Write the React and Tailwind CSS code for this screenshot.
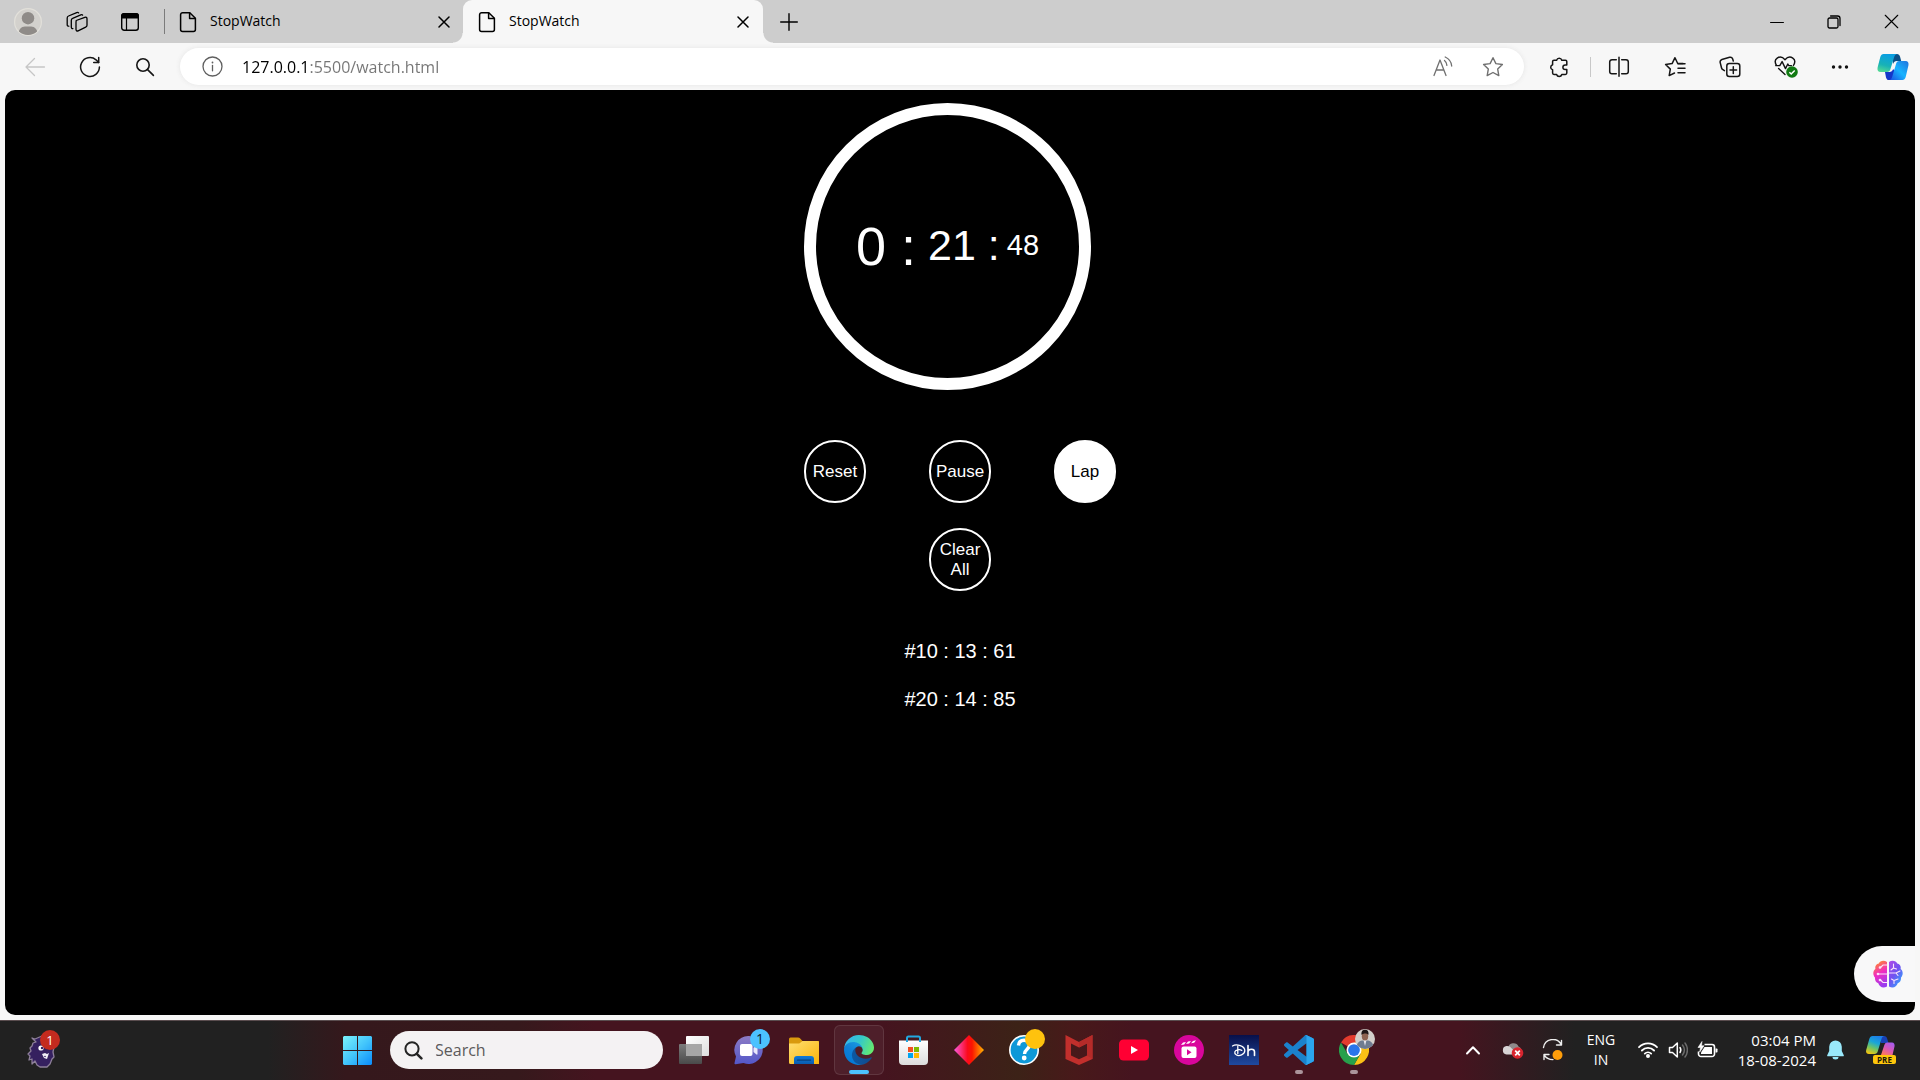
import React from "react";

const UI = "font-['Open_Sans','Noto_Sans',sans-serif]";

/* ---------- browser chrome icons ---------- */

function Line({ size = 20, box = 20, sw = 1.2, className = "", children }) {
  return (
    <svg
      width={size}
      height={size}
      viewBox={`0 0 ${box} ${box}`}
      fill="none"
      stroke="currentColor"
      strokeWidth={sw}
      strokeLinecap="round"
      strokeLinejoin="round"
      className={`shrink-0 ${className}`}
      aria-hidden="true"
    >
      {children}
    </svg>
  );
}

const AvatarIcon = () => (
  <svg width="28" height="28" viewBox="0 0 28 28" aria-hidden="true">
    <clipPath id="av">
      <circle cx="14" cy="14" r="13" />
    </clipPath>
    <circle cx="14" cy="14" r="13.4" fill="#d3d1cd" stroke="#e2e0da" strokeWidth="1.2" />
    <g clipPath="url(#av)" fill="#8f8b88">
      <circle cx="14" cy="10.2" r="6.2" />
      <path d="M4 28c0-6 3-9.6 7-9.6h6c4 0 7 3.600 7 9.600z" />
    </g>
  </svg>
);

const WorkspacesIcon = () => (
  <Line size={22} box={22} sw={1.3}>
    <path d="M10.200 9.500l8.600-3.200c1.200-.4 2.200.2 2.200 1.500v6.400c0 .9-.5 1.600-1.300 1.900l-7.600 3.700c-1.100.5-2.100 0-2.100-1.200v-7.300c0-.9.300-1.500.200-1.800z" />
    <path d="M6.900 17.600c-1 .1-1.600-.5-1.600-1.500V9.300c0-1 .4-1.700 1.300-2l8.200-3.500c.8-.3 1.500-.2 1.800.3" />
    <path d="M2.800 15.200c-1 .1-1.600-.5-1.600-1.500V7c0-1 .4-1.700 1.300-2l8.200-3.400c.8-.3 1.500-.2 1.900.3" />
  </Line>
);

const TabActionsIcon = () => (
  <svg width="20" height="20" viewBox="0 0 20 20" fill="none" aria-hidden="true">
    <rect x="1.700" y="1.700" width="16.600" height="16.600" rx="2.500" stroke="#000" strokeWidth="1.400" />
    <path d="M1 6.600V4a3 3 0 0 1 3-3h12a3 3 0 0 1 3 3v2.600z" fill="#000" />
    <path d="M6.500 6v12" stroke="#000" strokeWidth="1.200" />
  </svg>
);

const PageIcon = () => (
  <Line size={22} box={22} sw={1.500}>
    <path d="M5.600 1.700h7.200l5.600 5.500v11.200a2 2 0 0 1-2 2H5.600a2 2 0 0 1-2-2V3.700a2 2 0 0 1 2-2z" />
    <path d="M12.600 2v5.400h5.600" />
  </Line>
);

const CrossIcon = ({ size = 12, sw = 1.500 }) => (
  <Line size={size} box={12} sw={sw}>
    <path d="M1 1l10 10M11 1L1 11" />
  </Line>
);

const CopilotIcon = () => (
  <svg width="32" height="28" viewBox="0 0 32 28" aria-hidden="true">
    <defs>
      <linearGradient id="cp1" x1="0" y1="1" x2="0.300" y2="0">
        <stop offset="0" stopColor="#5de08f" />
        <stop offset=".45" stopColor="#18b2b6" />
        <stop offset="1" stopColor="#0a9fe0" />
      </linearGradient>
      <linearGradient id="cp2" x1="0" y1="1" x2="1" y2="0">
        <stop offset="0" stopColor="#1b4fe0" />
        <stop offset=".5" stopColor="#18b4ff" />
        <stop offset="1" stopColor="#2272dc" />
      </linearGradient>
    </defs>
    <path d="M15 1h5c1.600 0 2.500 1 3 2.600L24.200 8h-4.400c-2 0-3 1-3.800 3z" fill="#0b4f86" />
    <path d="M17 27h-5c-1.600 0-2.500-1-3-2.600L8 19h4.400c2 0 3-1 3.800-3l2.800 4z" fill="#1437c9" />
    <path d="M6.500 1H20c-1.500.3-2.300 1.500-2.900 3.300l-3.700 12C12.800 18.300 11.800 19 10 19H3.600C1 19 0 17 .6 14.500L3.300 4C3.900 2 5 1 6.500 1z" fill="url(#cp1)" />
    <path d="M25.500 27H12.300c1.500-.3 2.300-1.500 2.900-3.300l3.600-12C19.400 9 20.500 8 22.200 8h6.200c2.600 0 3.600 2 3 4.500L28.700 24c-.6 2-1.700 3-3.200 3z" fill="url(#cp2)" />
  </svg>
);

const HealthIcon = () => (
  <svg width="24" height="24" viewBox="0 0 24 24" fill="none" aria-hidden="true">
    <path
      d="M2.600 10.500C.7 7.500 1 4.600 3.200 3.100 5.800 1.400 8.800 2.200 11 4.700c2.200-2.500 5.200-3.300 7.800-1.600 2.200 1.500 2.500 4.400.6 7.400M1.600 10.600h4.200l2.300-4 3.400 7 2.300-4.600 1 1.600h2.600M4.600 13.400l6.400 6"
      stroke="#111"
      strokeWidth="1.400"
      strokeLinecap="round"
      strokeLinejoin="round"
    />
    <circle cx="18" cy="17" r="5.800" fill="#117a12" />
    <path d="M15.400 17.200l1.800 1.800 3.500-3.600" stroke="#fff" strokeWidth="1.500" />
  </svg>
);

function BrowserTab({ active }) {
  return (
    <div
      className={
        active
          ? "relative flex h-full w-[300px] items-center rounded-t-[9px] bg-[#f7f7f7] pl-[13px] pr-3"
          : "flex h-full w-[298px] items-center pl-[12px] pr-[11px]"
      }
    >
      {active && (
        <>
          <span className="absolute bottom-0 right-full h-2.5 w-2.5 bg-[radial-gradient(circle_at_0_0,#cdcdcd_9px,#f7f7f7_10px)]" />
          <span className="absolute bottom-0 left-full h-2.5 w-2.5 bg-[radial-gradient(circle_at_100%_0,#cdcdcd_9px,#f7f7f7_10px)]" />
        </>
      )}
      <PageIcon />
      <span className="ml-[11px] flex-1 pb-0.5 text-[14px] leading-5">StopWatch</span>
      <button aria-label="Close tab" className="flex h-4 w-4 items-center justify-center">
        <CrossIcon />
      </button>
    </div>
  );
}

function TabStrip() {
  return (
    <header className="flex h-[43px] items-center bg-[#cdcdcd]">
      <button aria-label="Profile" className="ml-3.5"><AvatarIcon /></button>
      <button aria-label="Workspaces" className="ml-[24px]"><WorkspacesIcon /></button>
      <button aria-label="Tab actions" className="ml-[32px]"><TabActionsIcon /></button>
      <span className="ml-6 h-[25px] w-px bg-[#7b7b7b]" />
      <nav className="flex h-full">
        <BrowserTab />
        <BrowserTab active />
      </nav>
      <button aria-label="New tab" className="ml-[17px]">
        <Line size={18} box={18} sw={1.400}><path d="M9 .7v16.600M.7 9h16.600" /></Line>
      </button>
      <div className="ml-auto mr-[21px] flex items-center gap-[43px]">
        <button aria-label="Minimize"><Line size={14} box={14} sw={1.200}><path d="M.6 7.500h12.800" /></Line></button>
        <button aria-label="Restore">
          <Line size={14} box={14} sw={1.300}>
            <rect x="1" y="3" width="10" height="10" rx="1.500" />
            <path d="M3.600 1h7A2.500 2.500 0 0 1 13 3.500v7" />
          </Line>
        </button>
        <button aria-label="Close window"><CrossIcon size={15} sw={0.900} /></button>
      </div>
    </header>
  );
}

function ToolBar() {
  return (
    <div className="flex h-[47px] items-center bg-[#f7f7f7] text-[#161616]">
      <button aria-label="Back" className="ml-[24px] text-[#c6c6c6]">
        <Line size={22} box={22} sw={1.300}><path d="M20.500 11H2M10.500 2.500L2 11l8.500 8.500" /></Line>
      </button>
      <button aria-label="Refresh" className="ml-[33px]">
        <Line size={22} box={22} sw={1.500}>
          <path d="M20.400 11a9.400 9.400 0 1 1-3.400-7.200l2.600 2.600" />
          <path d="M19.700 1.600v5h-5" />
        </Line>
      </button>
      <button aria-label="Search page" className="ml-[34px]">
        <Line size={20} box={20} sw={1.600}><circle cx="8" cy="8" r="6.200" /><path d="M12.600 12.600L18.400 18.400" /></Line>
      </button>
      <form className="ml-[25px] flex h-[37px] flex-1 items-center rounded-full bg-white pl-[22px] pr-5 shadow-[0_0_5px_#e4e4e4]">
        <button type="button" aria-label="Site information" className="text-[#5f5f5f]">
          <Line size={21} box={21} sw={1.300}>
            <circle cx="10.500" cy="10.500" r="9.500" />
            <path d="M10.500 9.500v5.300" />
            <path d="M10.500 6.500v.1" strokeWidth="1.800" />
          </Line>
        </button>
        <input
          aria-label="Address"
          defaultValue="127.0.0.1:5500/watch.html"
          className="ml-[19px] h-8 min-w-0 flex-1 bg-[linear-gradient(90deg,#000000_67px,#757575_67px)] bg-clip-text text-[16px] text-transparent outline-none"
        />
        <button type="button" aria-label="Read aloud" className="text-[#707070]">
          <Line size={22} box={22} sw={1.300}>
            <path d="M2 19.500L8 4l6 15.500M4.200 14h7.600" />
            <path d="M12.500 4.400c1.600 1.200 2.300 2.800 2.400 5M13.200 1c3.900 1.800 6.200 4.900 6.500 9" />
          </Line>
        </button>
        <button type="button" aria-label="Add to favorites" className="ml-[28px] text-[#707070]">
          <Line size={22} box={22} sw={1.400}>
            <path d="M11 1.700l2.900 5.900 6.500.9-4.700 4.600 1.100 6.500L11 16.500l-5.800 3.100 1.100-6.500L1.600 8.500l6.500-.9z" />
          </Line>
        </button>
      </form>
      <button aria-label="Extensions" className="ml-[25px]">
        <Line size={22} box={22} sw={1.500}>
          <path d="M5 4.200h2.600a2.700 2.700 0 0 1 5.200 0h3.600a1.400 1.400 0 0 1 1.400 1.400v3.300h-1.600a2.300 2.300 0 0 0 0 4.600h1.600v3.600a1.400 1.400 0 0 1-1.400 1.400h-3.600a2.700 2.700 0 0 1-5.200 0H5a1.400 1.400 0 0 1-1.400-1.400v-3.400a2.600 2.600 0 0 1 0-5V5.600A1.400 1.400 0 0 1 5 4.200z" />
        </Line>
      </button>
      <span className="ml-[19px] h-5 w-px bg-[#c8c8c8]" />
      <button aria-label="Split screen" className="ml-[17px]">
        <Line size={22} box={22} sw={1.500}>
          <path d="M8.300 3.700H4a2.300 2.300 0 0 0-2.300 2.300v9.500A2.300 2.300 0 0 0 4 17.800h4.300M13.700 3.700H18a2.300 2.300 0 0 1 2.300 2.300v9.500a2.300 2.300 0 0 1-2.300 2.300h-4.300M11 1.300v19" />
        </Line>
      </button>
      <button aria-label="Favorites" className="ml-[34px]">
        <Line size={22} box={22} sw={1.500}>
          <path d="M19 7.500h-5.300L11 1.700 8.100 7.600l-6.500.9 4.700 4.600-1.100 6.500 5.300-2.600" />
          <path d="M14 7.800h7M14 12.300h7M14 16.800h7" />
        </Line>
      </button>
      <button aria-label="Collections" className="ml-[33px]">
        <Line size={22} box={22} sw={1.500}>
          <rect x="7.800" y="7.600" width="13" height="13" rx="2.500" />
          <path d="M14.300 10.800v6.600M11 14.100h6.600" />
          <path d="M5.400 14.600l-1.500-.9c-.8-.5-1.200-1.200-1.400-2L1.200 6.600C.8 5 1.500 4 2.900 3.500l7.700-2.200c1.500-.4 2.500.2 3 1.500l.7 2.200" />
        </Line>
      </button>
      <button aria-label="Browser essentials" className="ml-[33px]"><HealthIcon /></button>
      <button aria-label="Settings and more" className="ml-[33px]">
        <svg width="18" height="6" viewBox="0 0 18 6" fill="#111" aria-hidden="true">
          <circle cx="2.500" cy="3" r="1.700" /><circle cx="9" cy="3" r="1.700" /><circle cx="15.500" cy="3" r="1.700" />
        </svg>
      </button>
      <button aria-label="Copilot" className="ml-[28px] mr-[11px]"><CopilotIcon /></button>
    </div>
  );
}

/* ---------- page ---------- */

const BrainIcon = () => (
  <svg width="30" height="28" viewBox="0 0 30 28" aria-hidden="true">
    <defs>
      <linearGradient id="brL" x1=".2" y1="0" x2=".5" y2="1">
        <stop offset="0" stopColor="#ff9a2c" />
        <stop offset=".2" stopColor="#fb6a5c" />
        <stop offset=".5" stopColor="#f22cc0" />
        <stop offset="1" stopColor="#9a3cf0" />
      </linearGradient>
      <linearGradient id="brR" x1="0" y1="0" x2=".8" y2="1">
        <stop offset="0" stopColor="#b04ae8" />
        <stop offset=".5" stopColor="#7350f0" />
        <stop offset="1" stopColor="#2ea8ff" />
      </linearGradient>
    </defs>
    <path d="M14 2C11-.3 7 .6 5.800 3.500 3 4 1.800 6.500 2.400 9 .3 10.500-.3 13.500 1 16c0 0 .2 1 1 1.600-.2 3 1 5 3.300 5.700C6.500 27 10 28.800 14 26.500z" fill="url(#brL)" />
    <path d="M16 2c3-2.300 7-1.400 8.200 1.500 2.800.5 4 3 3.400 5.500 2.100 1.500 2.700 4.500 1.400 7 0 0-.2 1-1 1.600.2 3-1 5-3.300 5.700C23.500 27 20 28.800 16 26.500z" fill="url(#brR)" />
    <g fill="none" stroke="#fbe4fb" strokeWidth="1.100" strokeLinecap="round">
      <path d="M14 5h-4L7.500 7.500M14 14H5.500M14 22.500h-4L7.500 20" />
      <path d="M20.500 4v4M20.500 8L18 10M20.500 8l3 1M16.500 13h6.500l4-2M23 13l2 2.500M18.500 19l2.500 1.500v3M21 20.500l4-1.500" />
      <circle cx="7" cy="7.500" r=".8" fill="#fff" /><circle cx="5" cy="14" r=".8" fill="#fff" /><circle cx="7" cy="20" r=".8" fill="#fff" />
    </g>
  </svg>
);

function RoundButton({ filled, children }) {
  return (
    <button
      className={
        filled
          ? "h-[63px] w-[62px] rounded-full border-2 border-white bg-white text-[17px] leading-5 text-black"
          : "h-[63px] w-[62px] rounded-full border-2 border-white text-[17px] leading-5 text-white"
      }
    >
      {children}
    </button>
  );
}

function StopWatch() {
  const laps = ["#10 : 13 : 61", "#20 : 14 : 85"];
  return (
    <main className="relative mx-[5px] mb-[5px] flex flex-1 flex-col items-center rounded-[10px] bg-black pt-[13px] font-['Liberation_Sans',Arial,sans-serif] text-white">
      <div className="w-[312px]">
        <div className="flex h-[287px] w-[287px] items-center justify-center whitespace-pre rounded-full border-[12px] border-white pb-0.5">
          <span className="mr-3 text-[54px] leading-none">0 :</span>
          <span className="mr-[7px] text-[43px] leading-none">21 :</span>
          <span className="text-[29px] leading-none">48</span>
        </div>
        <div className="mt-[50px] grid grid-cols-[62px_62px_62px] justify-between gap-y-[25px]">
          <RoundButton>Reset</RoundButton>
          <RoundButton>Pause</RoundButton>
          <RoundButton filled>Lap</RoundButton>
          <span />
          <RoundButton>Clear All</RoundButton>
        </div>
      </div>
      <ol className="mt-[48px] text-[20px] leading-6">
        {laps.map((lap) => (
          <li key={lap} className="mb-6">{lap}</li>
        ))}
      </ol>
      <button
        aria-label="Open assistant"
        className="absolute bottom-[13px] right-0 flex h-14 w-[61px] items-center rounded-l-full bg-[#f8f8f9] pl-[19px]"
      >
        <BrainIcon />
      </button>
    </main>
  );
}

/* ---------- taskbar ---------- */

const MonsterIcon = () => (
  <svg width="38" height="38" viewBox="0 0 38 38" aria-hidden="true">
    <path
      d="M13 8l-3-1 4 4-3 1-1 3-2 2 1 3-3 3 2 2-1 4 3-1 0 5 3-3 2 4 3 2h7l3-3 2-5 2-2-1-5 1-5-3-4-5-4-4-3z"
      fill="#35205f"
      stroke="#8d7f99"
      strokeWidth="1.300"
      strokeLinejoin="round"
    />
    <circle cx="19" cy="17" r="2.600" fill="#fff" /><circle cx="20" cy="17" r="1.200" fill="#35205f" />
    <path d="M20 23l3-1 2 1 2-1-1 3-1 3-3-1z" fill="#f0eef5" />
    <circle cx="23" cy="25.500" r=".8" fill="#35205f" />
  </svg>
);

const StartIcon = () => (
  <svg width="29" height="29" viewBox="0 0 29 29" aria-hidden="true">
    <defs>
      <linearGradient id="win" x1="0" y1="0" x2="29" y2="29" gradientUnits="userSpaceOnUse">
        <stop offset="0" stopColor="#7bf2fb" />
        <stop offset=".5" stopColor="#44c6fb" />
        <stop offset="1" stopColor="#0a8cfb" />
      </linearGradient>
    </defs>
    <path fill="url(#win)" d="M1 0h13v14H0V1zM15 0h13l1 1v13H15zM0 15h14v14H1l-1-1zM15 15h14v13l-1 1H15z" />
  </svg>
);

const TaskViewIcon = () => (
  <svg width="30" height="28" viewBox="0 0 30 28" aria-hidden="true">
    <defs>
      <linearGradient id="tvA" x1="0" y1="0" x2="0" y2="1"><stop offset="0" stopColor="#7c7c7c" /><stop offset="1" stopColor="#4a4a4a" /></linearGradient>
      <linearGradient id="tvB" x1="0" y1="0" x2="1" y2="1"><stop offset="0" stopColor="#fff" /><stop offset="1" stopColor="#dedede" /></linearGradient>
    </defs>
    <rect y="8" width="23" height="20" rx="1" fill="url(#tvA)" />
    <rect x="7" y="0" width="23" height="20" rx="1" fill="url(#tvB)" />
    <path d="M7 8h16v12H7z" fill="#a6a6a6" />
  </svg>
);

const ChatIcon = () => (
  <svg width="30" height="30" viewBox="0 0 30 30" aria-hidden="true">
    <defs><linearGradient id="chat" x1="0" y1="0" x2="0" y2="1"><stop offset="0" stopColor="#8c7bc4" /><stop offset="1" stopColor="#5357c9" /></linearGradient></defs>
    <path d="M15 1a14 14 0 1 1-5.500 27L1.500 29.200c-.8.100-1.200-.6-1-1.300L2 21.500A14 14 0 0 1 15 1z" fill="url(#chat)" />
    <rect x="6" y="9" width="12.500" height="12" rx="2" fill="#fff" />
    <path d="M19.500 13l3-2.500c.5-.4 1 0 1 .5v8c0 .5-.5.9-1 .5l-3-2.500z" fill="#e9e8fb" />
  </svg>
);

const FolderIcon = () => (
  <svg width="30" height="27" viewBox="0 0 30 27" aria-hidden="true">
    <defs>
      <linearGradient id="fo" x1="0" y1="0" x2="1" y2="1"><stop offset="0" stopColor="#ffdf72" /><stop offset="1" stopColor="#fbb409" /></linearGradient>
      <linearGradient id="fob" x1="0" y1="0" x2="0" y2="1"><stop offset="0" stopColor="#0f7ad8" /><stop offset="1" stopColor="#0a5cb0" /></linearGradient>
    </defs>
    <path d="M0 2a1.500 1.500 0 0 1 1.500-1.500h7.500c1 0 1.600.4 2.200 1L13.500 4H30v8H0z" fill="#d99a0e" />
    <path d="M0 6.500h9c1.500 0 2-.4 3-1.300L13.500 4H28.500A1.500 1.500 0 0 1 30 5.500V27H1.500A1.500 1.500 0 0 1 0 25.500z" fill="url(#fo)" />
    <path d="M5 27v-5a3 3 0 0 1 3-3h14a3 3 0 0 1 3 3v5z" fill="url(#fob)" />
    <path d="M8.500 23.200h13" stroke="#07427f" strokeWidth="1.200" strokeLinecap="round" />
  </svg>
);

const EdgeIcon = () => (
  <svg width="30" height="30" viewBox="0 0 256 256" aria-hidden="true">
    <defs>
      <linearGradient id="e1" x1="0" y1="0" x2="1" y2="0"><stop offset="0" stopColor="#0c59a4" /><stop offset="1" stopColor="#114a8b" /></linearGradient>
      <linearGradient id="e2" x1=".8" y1="0" x2=".2" y2="1"><stop offset="0" stopColor="#1b9de2" /><stop offset=".5" stopColor="#0f7fd6" /><stop offset="1" stopColor="#0078d4" /></linearGradient>
      <linearGradient id="e3" x1="0" y1=".3" x2="1" y2=".6"><stop offset="0" stopColor="#35b4f0" /><stop offset=".5" stopColor="#35c8c8" /><stop offset="1" stopColor="#66eb6e" /></linearGradient>
    </defs>
    <path fill="url(#e1)" d="M231 190.500c-3.400 1.800-6.900 3.400-10.500 4.700a101.500 101.500 0 0 1-35.900 6.500c-47.300 0-88.500-32.500-88.500-74.300.1-11.400 6.400-21.900 16.400-27.300-42.800 1.800-53.800 46.400-53.800 72.500 0 73.900 68.100 81.400 82.800 81.400 7.900 0 19.800-2.300 27-4.600l1.300-.4a128.300 128.300 0 0 0 66.600-52.800 4 4 0 0 0-5.400-5.700z" />
    <path fill="url(#e2)" d="M105.700 241.400a79.200 79.200 0 0 1-22.700-21.300 80.700 80.700 0 0 1 29.500-120c3.200-1.500 8.500-4.100 15.600-4a32.400 32.400 0 0 1 25.700 13 31.900 31.900 0 0 1 6.300 18.700c0-.2 24.500-79.600-80-79.600-43.900 0-80 41.700-80 78.200a130.200 130.200 0 0 0 12.100 56 128 128 0 0 0 156.400 67 75.500 75.500 0 0 1-62.800-8z" />
    <path fill="url(#e3)" d="M152.300 148.900c-.9 1-3.400 2.500-3.400 5.600 0 2.600 1.700 5.200 4.800 7.300 14.300 10 41.400 8.600 41.500 8.600 10.700 0 21.100-2.900 30.300-8.300A61.400 61.400 0 0 0 256 109.100c.3-22.400-8-37.300-11.300-43.900C223.500 23.900 177.700 0 128 0A128 128 0 0 0 0 126.200c.5-36.500 36.800-66 80-66 3.500 0 23.500.3 42 10.100 16.300 8.600 24.900 18.900 30.800 29.200 6.200 10.700 7.300 24.100 7.300 29.500 0 5.300-2.700 13.300-7.800 19.900z" />
  </svg>
);

const StoreIcon = () => (
  <svg width="30" height="30" viewBox="0 0 30 30" aria-hidden="true">
    <defs><linearGradient id="st" x1="0" y1="0" x2="0" y2="1"><stop offset="0" stopColor="#fff" /><stop offset="1" stopColor="#dcdcdc" /></linearGradient></defs>
    <path d="M0 5.500h29V26a4 4 0 0 1-4 4H4a4 4 0 0 1-4-4z" fill="url(#st)" />
    <path d="M8 7V3a1.500 1.500 0 0 1 1.500-1.500h10A1.500 1.500 0 0 1 21 3v4" fill="none" stroke="#22a8e0" strokeWidth="2" />
    <path d="M9 12h5v5H9z" fill="#f25022" /><path d="M15 12h5v5h-5z" fill="#7fba00" />
    <path d="M9 18h5v5H9z" fill="#00a4ef" /><path d="M15 18h5v5h-5z" fill="#ffb900" />
  </svg>
);

const DiamondIcon = () => (
  <svg width="30" height="30" viewBox="0 0 30 30" aria-hidden="true">
    <defs><linearGradient id="di"><stop offset="0" stopColor="#f85be0" /><stop offset=".45" stopColor="#fb0a1c" /><stop offset=".6" stopColor="#fb1500" /><stop offset="1" stopColor="#ffb400" /></linearGradient></defs>
    <path d="M15 0l15 15-15 15L0 15z" fill="url(#di)" />
  </svg>
);

const HelpIcon = () => (
  <svg width="30" height="30" viewBox="0 0 30 30" aria-hidden="true">
    <circle cx="15" cy="15" r="14.200" fill="#0d98d8" stroke="#fff" strokeWidth="1.600" />
    <path d="M9.500 10.500c.3-3.600 2.500-5.200 5.500-5.200 3.300 0 5.500 1.900 5.500 4.800 0 4-5 4.400-5 8.800" fill="none" stroke="#fff" strokeWidth="3.400" />
    <circle cx="15.200" cy="23" r="2.400" fill="#fff" />
  </svg>
);

const McAfeeIcon = () => (
  <svg width="28" height="30" viewBox="0 0 28 30" aria-hidden="true">
    <path fillRule="evenodd" d="M.5 0L14 7 27.500 0v24L14 30 .5 24zM6 8.500V20.500l8 3.700 8-3.700V8.500L14 12.600z" fill="#c22f2c" />
    <path d="M14 7L27.500 0v24L22 20.500v-12L14 12.600z" fill="#b52b29" />
  </svg>
);

const YouTubeIcon = () => (
  <svg width="30" height="22" viewBox="0 0 30 22" aria-hidden="true">
    <rect y=".5" width="30" height="21" rx="4.500" fill="#ff0033" />
    <path d="M12 7l7 4-7 4z" fill="#fff" />
  </svg>
);

const ClapperIcon = () => (
  <svg width="30" height="30" viewBox="0 0 30 30" aria-hidden="true">
    <circle cx="15" cy="15" r="15" fill="#d9069c" />
    <rect x="7.500" y="11.500" width="15" height="11.500" rx="2" fill="#fff" />
    <path d="M13 14.300l4.500 3-4.500 3z" fill="#d9069c" />
    <path d="M7 10l2-2.500 3-.6L10.200 9.400zM12 9.100l2-2.500 3-.6-1.800 2.500zM17 8.200l2-2.300 3-.6-1.800 2.500z" fill="#fff" />
  </svg>
);

const HotstarIcon = () => (
  <svg width="30" height="30" viewBox="0 0 30 30" aria-hidden="true">
    <defs><linearGradient id="ho" x1="0" y1="0" x2="0" y2="1"><stop offset="0" stopColor="#08104a" /><stop offset="1" stopColor="#1f4aa0" /></linearGradient></defs>
    <path d="M0 0h30v30H0z" fill="url(#ho)" />
    <g fill="none" stroke="#fff" strokeWidth="1.300" strokeLinecap="round">
      <path d="M3.500 11c4-2.600 12.500 0 12.300 4.800C15.700 19.500 10 21.500 7.500 20c-3-1.800-2-4.800 1.500-5.200 1.500-.2 3 0 3.800.6M8.800 11.500v7" />
      <path d="M19 10.500v10M19 16.500c.6-3 6.500-3.300 6.500.3v3.700" strokeWidth="1.600" />
    </g>
  </svg>
);

const VSCodeIcon = () => (
  <svg width="30" height="30" viewBox="0 0 100 100" aria-hidden="true">
    <path fillRule="evenodd" fill="#1b82cc" d="M70.900 99.300c1.600.6 3.400.6 5-.2l20.600-9.900c2.100-1 3.500-3.200 3.500-5.600V16.400c0-2.400-1.400-4.600-3.500-5.600L75.900.9c-2.100-1-4.600-.8-6.400.6-.3.200-.5.400-.7.600L29.400 38 12.200 25c-1.600-1.200-3.800-1.100-5.300.2l-5.500 5c-1.900 1.700-1.900 4.500 0 6.200L16.200 50 1.400 63.600c-1.900 1.600-1.900 4.500 0 6.100l5.500 5.100c1.500 1.300 3.700 1.400 5.300.2l17.200-13 39.400 35.900c.6.600 1.300 1.100 2.100 1.400zM75 27.300L45.100 50 75 72.700z" />
    <path fill="#2ba5ee" d="M75.900.9c-2.400-1.200-5.200-.7-7.100 1.200C71.100-.2 75 1.400 75 4.700v90.600c0 3.300-3.900 4.900-6.200 2.600 1.900 1.900 4.700 2.400 7.100 1.200l20.600-9.900c2.100-1 3.500-3.200 3.500-5.600V16.400c0-2.400-1.400-4.600-3.500-5.600z" />
  </svg>
);

const ChromeIcon = () => (
  <svg width="30" height="30" viewBox="0 0 48 48" aria-hidden="true">
    <path d="M24 24L3.200 12A24 24 0 0 1 44.800 12z" fill="#e33b2e" />
    <path d="M24 12h20.800A24 24 0 0 1 24 48l10.400-18z" fill="#fbc116" />
    <path d="M3.200 12A24 24 0 0 0 24 48l10.400-18L24 36 13.600 30z" fill="#27a04b" />
    <circle cx="24" cy="24" r="12" fill="#fff" />
    <circle cx="24" cy="24" r="9.400" fill="#2a75ea" />
  </svg>
);

const FaceBadge = () => (
  <svg width="20" height="20" viewBox="0 0 20 20" aria-hidden="true">
    <clipPath id="face"><circle cx="10" cy="10" r="10" /></clipPath>
    <g clipPath="url(#face)">
      <path d="M0 0h20v20H0z" fill="#d3cfca" />
      <path d="M1 20c0-5 3-8 6-8.500h6c3 .5 6 3.500 6 8.500z" fill="#6f7c90" />
      <path d="M8.500 11h3L10 17z" fill="#e8e8ee" />
      <ellipse cx="10" cy="7.200" rx="3.200" ry="4.400" fill="#8d6350" />
      <path d="M6.500 6C6 2 8 .8 10 .8S14 2 13.500 6C12.500 4 8 4 6.500 6z" fill="#1f1716" />
    </g>
  </svg>
);

const apps = [
  { name: "Task view", icon: <TaskViewIcon /> },
  { name: "Chat", icon: <ChatIcon />, badge: "1" },
  { name: "File Explorer", icon: <FolderIcon /> },
  { name: "Microsoft Edge", icon: <EdgeIcon />, active: true },
  { name: "Microsoft Store", icon: <StoreIcon /> },
  { name: "Diamond app", icon: <DiamondIcon /> },
  { name: "Help", icon: <HelpIcon />, dot: true },
  { name: "McAfee", icon: <McAfeeIcon /> },
  { name: "YouTube", icon: <YouTubeIcon /> },
  { name: "Video editor", icon: <ClapperIcon /> },
  { name: "Disney+ Hotstar", icon: <HotstarIcon /> },
  { name: "Visual Studio Code", icon: <VSCodeIcon />, running: true },
  { name: "Google Chrome", icon: <ChromeIcon />, running: true, face: true },
];

function AppButton({ name, icon, badge, active, dot, running, face }) {
  return (
    <button
      aria-label={name}
      className={
        active
          ? "relative flex h-[50px] w-[50px] items-center justify-center rounded-md border border-white/10 bg-white/5"
          : "relative flex h-[50px] w-[50px] items-center justify-center"
      }
    >
      {icon}
      {badge && (
        <span className="absolute right-1 top-1 flex h-5 w-5 items-center justify-center rounded-full bg-[#4cc2ff] text-[14px] leading-5 text-[#0d2230]">
          {badge}
        </span>
      )}
      {dot && <span className="absolute right-1 top-1 h-5 w-5 rounded-full bg-[#ffc20e]" />}
      {face && <span className="absolute right-1 top-1"><FaceBadge /></span>}
      {active && <span className="absolute bottom-0 h-1 w-5 rounded-full bg-[#4cc2ff]" />}
      {running && <span className="absolute bottom-px h-1 w-2 rounded-full bg-[#ab949b]" />}
    </button>
  );
}

function Tray() {
  return (
    <div className="ml-auto mr-[24px] flex items-center text-white">
      <button aria-label="Show hidden icons">
        <Line size={16} box={16} sw={2}><path d="M2 11.500l6-6.300 6 6.300" /></Line>
      </button>
      <button aria-label="OneDrive" className="ml-[21px]">
        <svg width="22" height="20" viewBox="0 0 22 20" aria-hidden="true">
          <path d="M6 8a5.500 5.500 0 0 1 10.500-1.500A4.500 4.500 0 0 1 18 14H9z" fill="#8f8a8b" />
          <path d="M4.500 14.500a4.300 4.300 0 0 1 0-8.500c2-.3 3.600.5 4.500 1.800l7 6.700z" fill="#d8d4d5" />
          <circle cx="15.500" cy="13" r="5.800" fill="#d9252f" />
          <path d="M13.200 10.700l4.600 4.600M17.800 10.700l-4.600 4.600" stroke="#fff" strokeWidth="1.700" />
        </svg>
      </button>
      <button aria-label="Updates" className="ml-[18px]">
        <svg width="22" height="22" viewBox="0 0 22 22" fill="none" aria-hidden="true">
          <path d="M1.500 8.500A9.500 9.500 0 0 1 19.500 6M19.500 1.500V6h-5M11 20.600c-4 0-7-1.600-8.800-4.800M2 20.500v-5h5" stroke="#eee" strokeWidth="1.400" strokeLinecap="round" strokeLinejoin="round" />
          <circle cx="15.500" cy="16" r="5" fill="#ff9d0a" />
        </svg>
      </button>
      <button className="ml-[22px] w-[30px] text-center text-[14px] leading-5">ENG IN</button>
      <button aria-label="Network, volume and battery" className="ml-[21px] flex items-center gap-[9px]">
        <Line size={22} box={22} sw={1.800}>
          <path d="M2 8.200a12.600 12.600 0 0 1 18 0M4.900 11.500a8.600 8.600 0 0 1 12.200 0M7.800 14.600a4.600 4.600 0 0 1 6.400 0" />
          <circle cx="11" cy="17" r="1.100" fill="currentColor" />
        </Line>
        <Line size={20} box={20} sw={1.500}>
          <path d="M1.500 7.500h3L9.300 3v14l-4.800-4.500h-3z" />
          <path d="M12 7.500c1 1.500 1 3.500 0 5" />
          <path d="M14.500 5c2.300 3 2.300 7 0 10M17 3c3.200 4 3.200 10 0 14" stroke="#6b6b6b" />
        </Line>
        <svg width="21" height="18" viewBox="0 0 21 18" fill="none" aria-hidden="true">
          <path d="M7.500 3.500H15A2.500 2.500 0 0 1 17.500 6v7a2.500 2.500 0 0 1-2.500 2.500H4A2.500 2.500 0 0 1 1.500 13v-2.500" stroke="#fff" strokeWidth="1.600" />
          <path d="M7.500 6H15v7H4v-1.500z" fill="#fff" />
          <path d="M18.500 7.500h1.200a.8.800 0 0 1 .8.800v2.400a.8.800 0 0 1-.8.800h-1.200z" fill="#fff" />
          <path d="M5 .5L1 6.500h2.500L2.700 11 7 4.800H4.500z" fill="#fff" stroke="#fff" strokeWidth=".6" />
        </svg>
      </button>
      <button className="ml-[16px] w-[82px] text-right text-[15px] leading-5 whitespace-nowrap">
        <span className="block">03:04 PM</span>
        <span className="block">18-08-2024</span>
      </button>
      <button aria-label="Notifications" className="ml-[11px]">
        <svg width="17" height="20" viewBox="0 0 17 20" fill="#99e9fb" aria-hidden="true">
          <path d="M8.500.5A6.300 6.300 0 0 1 14.800 6.800v4.200l2 4.200c.2.500-.1 1-.6 1H.8c-.5 0-.8-.5-.6-1l2-4.200V6.800A6.300 6.300 0 0 1 8.500.5zM5.500 17h6a3 2.500 0 0 1-6 0z" />
        </svg>
      </button>
      <button aria-label="Copilot preview" className="relative ml-[22px]">
        <svg width="30" height="30" viewBox="0 0 30 30" aria-hidden="true">
          <defs>
            <linearGradient id="pr1" x1=".6" y1="0" x2=".2" y2="1"><stop offset="0" stopColor="#1c7fe8" /><stop offset=".35" stopColor="#19a6d8" /><stop offset=".65" stopColor="#6cc468" /><stop offset="1" stopColor="#f6c50d" /></linearGradient>
            <linearGradient id="pr2" x1=".8" y1="0" x2=".2" y2="1"><stop offset="0" stopColor="#a45cf0" /><stop offset=".5" stopColor="#d858b8" /><stop offset="1" stopColor="#ff7a58" /></linearGradient>
          </defs>
          <path d="M14 1h4c1.800 0 2.700 1 3.200 2.700L22.500 8H15z" fill="#1740b4" />
          <path d="M6.500 1H18c-1.400.4-2 1.500-2.600 3.300l-3.600 12c-.5 2-1.500 2.700-3.300 2.700H3C.5 19-.4 17.500.2 15L3.300 4C3.900 2 5 1 6.500 1z" fill="url(#pr1)" />
          <path d="M15 20l3-9c.7-2.400 1.600-3.500 3.500-3.500H26c2 0 3 1.800 2.500 4L26.500 20z" fill="url(#pr2)" />
        </svg>
        <span className="absolute bottom-px left-[7px] h-[9px] w-[23px] rounded-[2px] bg-[#fdc60b] text-center text-[8px] font-bold leading-[9px] text-[#1b1708]">
          PRE
        </span>
      </button>
    </div>
  );
}

function TaskBar() {
  return (
    <footer className="flex h-[60px] items-center border-t border-[#5a4d4f] bg-[#212121] bg-[linear-gradient(90deg,#212121_14%,#35181c_18%,#36191c_27%,#45141f_31%,#45141f_46%,#3c2217_53%,#48191a_56%,#45141f_59%,#45141f_76%,#212121_82%)] pb-px">
      <div className="flex w-[334px] items-center pl-[22px]">
        <button aria-label="Widgets" className="relative">
          <MonsterIcon />
          <span className="absolute right-0 -top-px flex h-5 w-5 items-center justify-center rounded-full bg-[#c42b1f] text-[13px] leading-5 text-white">
            1
          </span>
        </button>
      </div>
      <button aria-label="Start" className="ml-[9px]"><StartIcon /></button>
      <label className="ml-[18px] flex h-[38px] w-[273px] items-center rounded-full bg-[#f4f2f3] pl-3.5">
        <Line size={19} box={19} sw={2} className="text-[#242424]">
          <circle cx="8" cy="7.800" r="6.600" />
          <path d="M12.800 12.800l4.600 4.600" strokeWidth="2.500" />
        </Line>
        <input
          aria-label="Search"
          placeholder="Search"
          className="ml-3 w-full min-w-0 rounded-full bg-transparent text-[16px] outline-none placeholder:text-[#5c5a5b]"
        />
      </label>
      <div className="ml-1.5 flex gap-[5px]">
        {apps.map((app) => (
          <AppButton key={app.name} {...app} />
        ))}
      </div>
      <Tray />
    </footer>
  );
}

export default function App() {
  return (
    <div className={`flex min-h-screen flex-col bg-[#f7f7f7] text-black ${UI}`}>
      <TabStrip />
      <ToolBar />
      <StopWatch />
      <TaskBar />
    </div>
  );
}
